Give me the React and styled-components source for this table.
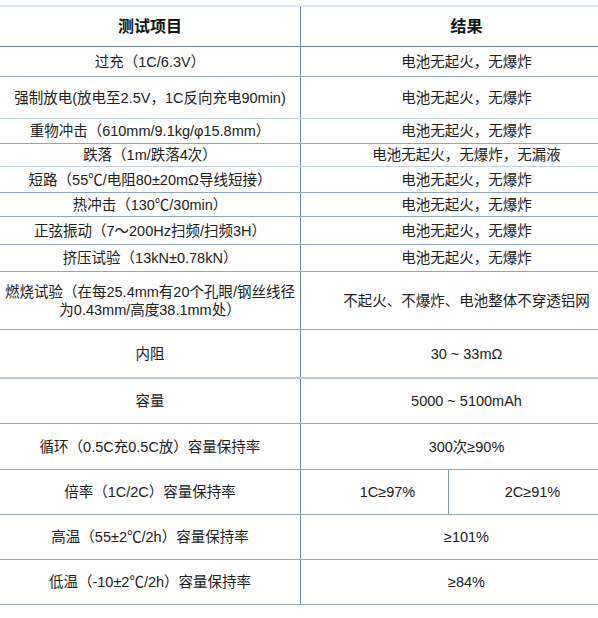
import React from "react";
import styled, { createGlobalStyle } from "styled-components";

const GlobalStyle = createGlobalStyle`
  html, body {
    margin: 0;
    padding: 0;
    background: #ffffff;
    overflow: hidden;
  }
  body {
    font-family: "Liberation Sans", "Noto Sans CJK SC", sans-serif;
    color: #202020;
  }
`;

const rows = [
  { item: "过充（1C/6.3V）", result: "电池无起火，无爆炸", h: 30 },
  { item: "强制放电(放电至2.5V，1C反向充电90min)", result: "电池无起火，无爆炸", h: 42, tone: "light" },
  { item: "重物冲击（610mm/9.1kg/φ15.8mm）", result: "电池无起火，无爆炸", h: 25 },
  { item: "跌落（1m/跌落4次）", result: "电池无起火，无爆炸，无漏液", h: 23, tone: "light" },
  { item: "短路（55℃/电阻80±20mΩ导线短接）", result: "电池无起火，无爆炸", h: 26 },
  { item: "热冲击（130℃/30min）", result: "电池无起火，无爆炸", h: 24 },
  { item: "正弦振动（7～200Hz扫频/扫频3H）", result: "电池无起火，无爆炸", h: 28 },
  { item: "挤压试验（13kN±0.78kN）", result: "电池无起火，无爆炸", h: 27 },
  {
    item: "燃烧试验（在每25.4mm有20个孔眼/钢丝线径为0.43mm/高度38.1mm处）",
    result: "不起火、不爆炸、电池整体不穿透铝网",
    h: 58,
  },
  { item: "内阻", result: "30 ~ 33mΩ", h: 49, tone: "thick" },
  { item: "容量", result: "5000 ~ 5100mAh", h: 45 },
  { item: "循环（0.5C充0.5C放）容量保持率", result: "300次≥90%", h: 46 },
  { item: "倍率（1C/2C）容量保持率", split: ["1C≥97%", "2C≥91%"], h: 45 },
  { item: "高温（55±2℃/2h）容量保持率", result: "≥101%", h: 45 },
  { item: "低温（-10±2℃/2h）容量保持率", result: "≥84%", h: 45 },
];

const borderFor = (tone) => {
  if (tone === "light") return "1px solid #c3d0df";
  if (tone === "thick") return "2px solid #b7c8dc";
  return "1px solid #8ea5bd";
};

export default function App() {
  return (
    <>
      <GlobalStyle />
      <Page>
        <Table>
          <Row $h={40} $border="1px solid #6c8097">
            <HeadCell>测试项目</HeadCell>
            <HeadCell $right>结果</HeadCell>
          </Row>
          {rows.map((r, i) => (
            <Row key={i} $h={r.h} $border={borderFor(r.tone)}>
              <Cell>{r.item}</Cell>
              {r.split ? (
                <SplitCell>
                  <SubCell $first>{r.split[0]}</SubCell>
                  <SubCell>{r.split[1]}</SubCell>
                </SplitCell>
              ) : (
                <Cell $right>{r.result}</Cell>
              )}
            </Row>
          ))}
        </Table>
      </Page>
    </>
  );
}

const Page = styled.div`
  width: 598px;
  height: 618px;
  padding-top: 5px;
  box-sizing: border-box;
  overflow: hidden;
`;

const Table = styled.div`
  width: 632px;
  border-top: 2px solid #dce7f4;
  display: flex;
  flex-direction: column;
`;

const Row = styled.div`
  display: grid;
  grid-template-columns: 300px 1fr;
  height: ${({ $h }) => $h}px;
  border-bottom: ${({ $border }) => $border};
  box-sizing: border-box;
`;

const Cell = styled.div`
  display: flex;
  align-items: center;
  justify-content: center;
  text-align: center;
  font-size: 14.5px;
  line-height: 18px;
  padding: 0 ${({ $right }) => ($right ? "0" : "3px")};
  border-left: ${({ $right }) => ($right ? "1px solid #6d87a5" : "none")};
  box-sizing: border-box;
  white-space: ${({ $right }) => ($right ? "nowrap" : "normal")};
`;

const HeadCell = styled(Cell)`
  font-size: 16px;
  font-weight: bold;
  color: #111111;
`;

const SplitCell = styled.div`
  display: grid;
  grid-template-columns: 148px 1fr;
  border-left: 1px solid #6d87a5;
`;

const SubCell = styled.div`
  display: flex;
  align-items: center;
  justify-content: center;
  font-size: 14.5px;
  padding-left: ${({ $first }) => ($first ? "26px" : "0")};
  padding-right: ${({ $first }) => ($first ? "0" : "16px")};
  border-right: ${({ $first }) => ($first ? "1px solid #7e97b2" : "none")};
`;
